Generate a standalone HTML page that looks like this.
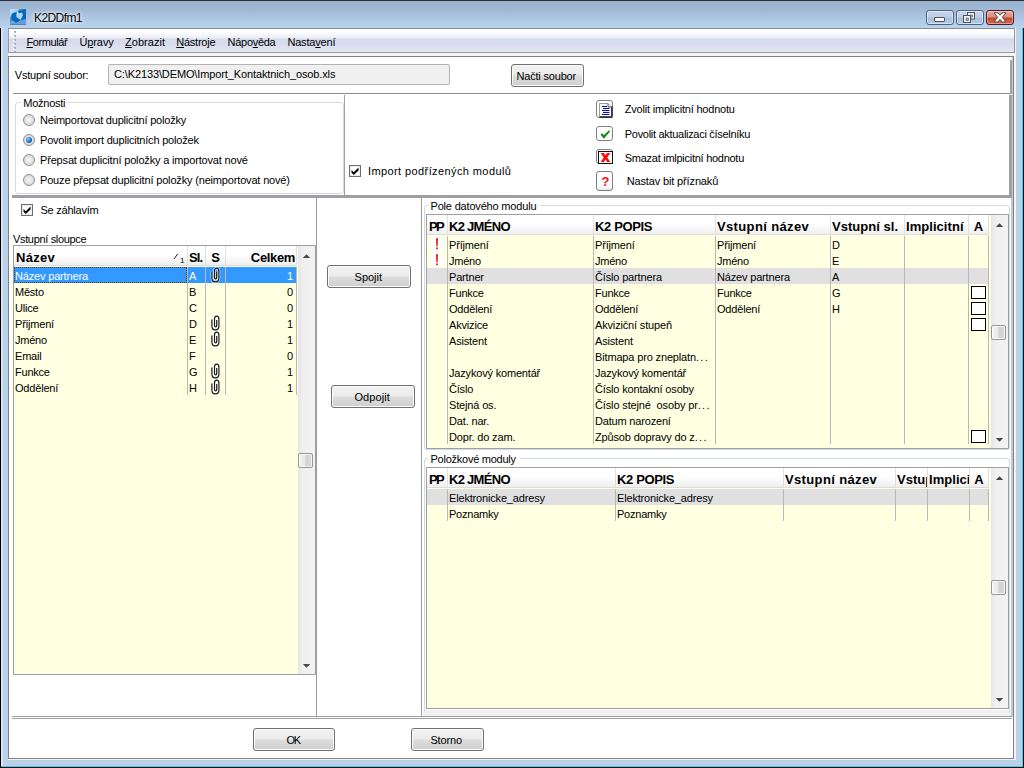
<!DOCTYPE html>
<html><head><meta charset="utf-8"><title>K2DDfm1</title>
<style>
*{box-sizing:border-box;margin:0;padding:0}
html,body{width:1024px;height:768px;overflow:hidden}
body{position:relative;background:#b3cce6;font-family:"Liberation Sans","DejaVu Sans",sans-serif;font-size:11px;color:#000}
.a{position:absolute}
.t{position:absolute;white-space:nowrap;line-height:14px;font-size:11px}
.frame{left:0;top:0;width:1024px;height:768px;background:linear-gradient(180deg,#98b2ce 0,#a0bad6 10px,#b0c9e5 20px,#b9d3ee 28px,#b9d2ec 60px,#b9d1ea 100%)}
.menubar{left:8px;top:28px;width:1007px;height:25px;border:1px solid #999;border-top-color:#8c8c8c;background:linear-gradient(180deg,#ffffff 0,#fbfbfd 4px,#eceef7 9px,#d5daec 10px,#d9ddee 16px,#e4e7f3 23px)}
.client{left:8px;top:56px;width:1006px;height:703px;background:#fff;border:1px solid #828282}
.btn{position:absolute;border:1px solid #707070;border-radius:3px;background:linear-gradient(180deg,#f2f2f2 0,#ebebeb 48%,#dddddd 52%,#cfcfcf 100%);box-shadow:inset 0 0 0 1px #fcfcfc;height:23px}
.grid{position:absolute;background:#ffffe1;border:1px solid #a0a0a0;overflow:hidden}
.hd{position:absolute;top:0;height:19px;background:linear-gradient(180deg,#ffffff 0,#ffffff 45%,#efefef 100%);font-weight:bold;font-size:13px;line-height:19px;white-space:nowrap;overflow:hidden;border-right:1px solid #e0e0e0;border-bottom:1px solid #dcdcdc}
.c{position:absolute;white-space:pre;font-size:11px;line-height:16px;height:16px;overflow:hidden}
.vl{position:absolute;width:1px;background:#b8b8b8}
.hl{position:absolute;height:1px;background:#a0a0a0}
.gb{position:absolute;border:1px solid #d0dbe6;border-radius:3px}
.radio{position:absolute;width:12px;height:12px;border-radius:50%;border:1px solid #8e8f8f;background:radial-gradient(circle at 50% 50%,#f6f6f6 0,#dcdcdc 65%,#c4c4c4 100%)}
.chk{position:absolute;width:12px;height:12px;border:1px solid #6e6e6e;background:#fff;box-shadow:inset 0 0 0 1px #ececec}
.sb{position:absolute;background:linear-gradient(90deg,#e6e6e6 0,#f0f0f0 30%,#f3f3f3 100%)}
.thumb{position:absolute;border:1px solid #979797;border-radius:2px;background:linear-gradient(90deg,#f4f4f4 0,#e6e6e6 48%,#d0d0d0 52%,#dadada 100%);box-shadow:inset 0 0 0 1px rgba(255,255,255,.7)}
.row{position:absolute;height:16px}
.cb{position:absolute;width:15px;height:13px;border:1px solid #000;background:#fff}
.ib{position:absolute;width:17px;border:1px solid #808080;border-radius:3px;background:#fff}
.cap{position:absolute;top:10px;height:15px;border-radius:3px}
</style></head><body>
<div class="a frame"></div>
<div class="a" style="left:0;top:0;width:1024px;height:1px;background:#2e2e2e"></div>
<div class="a" style="left:1px;top:28px;width:2px;height:738px;background:#d6e4f3"></div>
<div class="a" style="left:0;top:28px;width:1px;height:740px;background:#000"></div>
<div class="a" style="left:1022px;top:28px;width:1px;height:739px;background:#27d9f5"></div>
<div class="a" style="left:1px;top:766px;width:1022px;height:1px;background:#27d9f5"></div>
<div class="a" style="left:1023px;top:28px;width:1px;height:740px;background:#000"></div>
<div class="a" style="left:0;top:767px;width:1024px;height:1px;background:#000"></div>
<div class="a" style="left:8px;top:28px;width:1008px;height:732px;background:#f4f4f4"></div>

<svg class="a" style="left:10px;top:9px" width="16" height="16" viewBox="0 0 16 16">
<defs><linearGradient id="ig" x1="0" y1="0" x2="1" y2="1"><stop offset="0" stop-color="#9fd0f0"/><stop offset="0.35" stop-color="#3d97d6"/><stop offset="1" stop-color="#0a64b0"/></linearGradient></defs>
<rect width="16" height="16" fill="url(#ig)"/>
<path d="M2 4.5 L6.5 2.5 L6.5 8 L10 11.5 L6 14 L1 10 Z" fill="#0668b6"/>
<path d="M8 2 L16 0 L16 10 L11 11 L13 6 L12 3.5 L9 4.5 Z" fill="#0668b6"/>
<path d="M6.5 5.5 L7.6 2.5 L8.6 4.6 L11.8 3.4 L13 6 L10.6 10.8 L6.5 8 Z" fill="#a8d8f4"/>
<path d="M0 13 L3 11.5 L6 14 L10.5 11.5 L16 10 L16 16 L0 16 Z" fill="#7aa6da" opacity="0.85"/>
<path d="M0 0 L9.5 0 L7 3 L2 4.6 L0 8 Z" fill="#fff" opacity=".45"/><path d="M7.2 2.4 L8.2 2.4 L8 6 L7 6 Z" fill="#fff" opacity=".8"/><rect x="0" y="15.3" width="16" height=".7" fill="#3a62a4" opacity=".7"/>
</svg>

<div class="t" style="left:34px;top:10px;letter-spacing:-0.59px;font-size:12px;line-height:16px;text-shadow:0 0 3px #fff,0 0 5px #fff">K2DDfm1</div>

<div class="cap" style="left:926px;width:28px;border:1px solid #4f6480;background:linear-gradient(180deg,#c6d6ea 0,#bccee5 48%,#a7bfdb 52%,#b4cae4 100%);box-shadow:inset 0 0 0 1px rgba(255,255,255,.45)"></div>
<div class="cap" style="left:956px;width:28px;border:1px solid #4f6480;background:linear-gradient(180deg,#c6d6ea 0,#bccee5 48%,#a7bfdb 52%,#b4cae4 100%);box-shadow:inset 0 0 0 1px rgba(255,255,255,.45)"></div>
<div class="cap" style="left:986px;width:28px;border:1px solid #5a1520;background:linear-gradient(180deg,#e6ad9f 0,#d98c7b 48%,#c4452b 52%,#d46a50 100%);box-shadow:inset 0 0 0 1px rgba(255,255,255,.35)"></div>
<div class="a" style="left:934px;top:17px;width:11px;height:5px;border:1px solid #50525a;background:#f6f6f6;border-radius:1px"></div>
<svg class="a" style="left:962px;top:11px" width="14" height="13" viewBox="0 0 14 13"><rect x="5.5" y="1.5" width="7" height="6.5" fill="#f2f2f2" stroke="#50525a"/><rect x="8" y="4" width="2.5" height="2" fill="#9fb4cf" stroke="#50525a" stroke-width=".6"/><rect x="1.5" y="4.5" width="7" height="7" fill="#f2f2f2" stroke="#50525a"/><rect x="4" y="7" width="2.5" height="2.5" fill="#9fb4cf" stroke="#50525a" stroke-width=".6"/></svg>
<svg class="a" style="left:993px;top:12px" width="14" height="11" viewBox="0 0 14 11"><path d="M1 0.8 L5 0.8 L7 3.2 L9 0.8 L13 0.8 L9.3 5.3 L13 10 L9 10 L7 7.4 L5 10 L1 10 L4.7 5.3 Z" fill="#fbfbfb" stroke="#5a4a50" stroke-width="1"/></svg>

<div class="a menubar"></div>
<svg class="a" style="left:13px;top:30px" width="4" height="23" viewBox="0 0 4 23"><g fill="#a9abb8"><rect x="1" y="1" width="2" height="2"/><rect x="1" y="5" width="2" height="2"/><rect x="1" y="9" width="2" height="2"/><rect x="1" y="13" width="2" height="2"/><rect x="1" y="17" width="2" height="2"/><rect x="1" y="21" width="2" height="1"/></g><g fill="#fff"><rect x="0" y="2" width="1.5" height="1.5"/><rect x="0" y="6" width="1.5" height="1.5"/><rect x="0" y="10" width="1.5" height="1.5"/><rect x="0" y="14" width="1.5" height="1.5"/><rect x="0" y="18" width="1.5" height="1.5"/></g></svg>

<div class="t" style="left:26.5px;top:35px;letter-spacing:-0.4px;"><u>F</u>ormulář</div>
<div class="t" style="left:79.4px;top:35px;letter-spacing:-0.09px;">Ú<u>p</u>ravy</div>
<div class="t" style="left:125.1px;top:35px;letter-spacing:0.02px;"><u>Z</u>obrazit</div>
<div class="t" style="left:176.3px;top:35px;letter-spacing:-0.25px;"><u>N</u>ástroje</div>
<div class="t" style="left:227.6px;top:35px;letter-spacing:-0.29px;">Nápo<u>v</u>ěda</div>
<div class="t" style="left:287.4px;top:35px;letter-spacing:-0.18px;">Nasta<u>v</u>ení</div>
<div class="a client"></div>
<div class="a" style="left:1012px;top:57px;width:1px;height:660px;background:#c8c8c8"></div>
<div class="a" style="left:1010px;top:60px;width:2px;height:34px;background:#a0a0a0"></div>
<div class="a" style="left:1009px;top:95px;width:3px;height:103px;background:#a0a0a0"></div>
<div class="t" style="left:14.8px;top:68px;letter-spacing:-0.23px;">Vstupní soubor:</div>
<div class="a" style="left:108px;top:64px;width:342px;height:21px;border:1px solid #b4b4b4;border-radius:2px;background:#f0f0f0"></div>
<div class="t" style="left:114px;top:67px;letter-spacing:-0.12px;">C:\K2133\DEMO\Import_Kontaktnich_osob.xls</div>
<div class="btn" style="left:511px;top:64px;width:73px"></div>
<div class="t" style="left:516.5px;top:69px;letter-spacing:-0.19px;">Načti soubor</div>
<div class="hl" style="left:13px;top:93px;width:998px;background:#8e8e8e"></div>
<div class="gb" style="left:15px;top:102px;width:329px;height:92px"></div>
<div class="a" style="left:21px;top:100px;width:46px;height:5px;background:#fff"></div>
<div class="t" style="left:23.25px;top:96px;letter-spacing:-0.25px;">Možnosti</div>
<div class="radio" style="left:23px;top:114px"></div>
<div class="radio" style="left:23px;top:134px"></div>
<div class="radio" style="left:23px;top:154px"></div>
<div class="radio" style="left:23px;top:174px"></div>
<div class="a" style="left:26px;top:137px;width:6px;height:6px;border-radius:50%;background:radial-gradient(circle at 35% 35%,#7fd0ff 0,#1c6ec4 55%,#0b3f8c 100%)"></div>
<div class="t" style="left:40px;top:113px;letter-spacing:-0.2px;">Neimportovat duplicitní položky</div>
<div class="t" style="left:40px;top:133px;letter-spacing:-0.2px;">Povolit import duplicitních položek</div>
<div class="t" style="left:40px;top:153px;letter-spacing:-0.17px;">Přepsat duplicitní položky a importovat nové</div>
<div class="t" style="left:40px;top:173px;letter-spacing:-0.17px;">Pouze přepsat duplicitní položky (neimportovat nové)</div>
<div class="vl" style="left:344px;top:95px;height:101px;background:#a0a0a0"></div>
<div class="chk" style="left:349px;top:165px"></div><svg class="a" style="left:349px;top:165px" width="12" height="12" viewBox="0 0 12 12"><path d="M2.5 4.9 L4.8 7.2 L9.5 2.5 L9.5 5.4 L4.8 10.1 L2.5 7.8 Z" fill="#000"/></svg>
<div class="t" style="left:368px;top:164px;letter-spacing:0.4px;">Import podřízených modulů</div>
<div class="ib" style="left:596px;top:100px;height:18px"></div>
<svg class="a" style="left:598px;top:102px" width="15" height="16" viewBox="0 0 15 16"><path d="M1.5 1.5 H10 L13.5 5 V14.5 H1.5 Z" fill="#fff" stroke="#9a9a9a"/><path d="M10 1.5 V5 H13.5" fill="#e8e8e8" stroke="#333" stroke-width=".8"/><path d="M13.9 4.5 V15.2 H1.5" fill="none" stroke="#111" stroke-width="1.2"/><g stroke="#1414b4" stroke-width="1.1"><path d="M4 4.5 H9"/><path d="M5 6.5 H11.5"/><path d="M4 8.5 H11.5"/><path d="M5 10.5 H11.5"/><path d="M4 12.5 H11.5"/></g></svg>
<div class="ib" style="left:596px;top:126px;height:15px"></div>
<svg class="a" style="left:599px;top:128px" width="12" height="12" viewBox="0 0 12 12"><path d="M1.5 6.5 L3.2 5.2 L4.8 7.2 L10 2.2 L11 3.6 L4.8 10.8 Z" fill="#0a8a0a"/></svg>
<div class="ib" style="left:596px;top:149px;height:15px"></div>
<div class="a" style="left:598px;top:151px;width:15px;height:13px;border:1px solid #111;background:#fff"></div>
<svg class="a" style="left:600px;top:152px" width="11" height="11" viewBox="0 0 11 11"><path d="M0.6 1 L3.9 1 L5.5 3.3 L7.1 1 L10.4 1 L7.2 5.4 L10.4 9.9 L7.1 9.9 L5.5 7.5 L3.9 9.9 L0.6 9.9 L3.8 5.4 Z" fill="#ff0a0a"/></svg>
<div class="ib" style="left:596px;top:171px;height:20px;background:linear-gradient(180deg,#fff 0,#fff 80%,#e4e4e4 100%)"></div>
<div class="a" style="left:597px;top:174px;width:17px;text-align:center;color:#ff0a0a;font-weight:bold;font-size:13px;line-height:15px">?</div>

<div class="t" style="left:624.8px;top:102px;letter-spacing:-0.2px;">Zvolit implicitní hodnotu</div>
<div class="t" style="left:624.8px;top:127px;letter-spacing:-0.3px;">Povolit aktualizaci číselníku</div>
<div class="t" style="left:624.8px;top:151px;letter-spacing:-0.27px;">Smazat imlpicitní hodnotu</div>
<div class="t" style="left:626.7px;top:174px;letter-spacing:-0.14px;">Nastav bit příznaků</div>
<div class="hl" style="left:12px;top:195px;width:1000px;height:3px;background:#9f9f9f"></div>
<div class="chk" style="left:21px;top:204px"></div><svg class="a" style="left:21px;top:204px" width="12" height="12" viewBox="0 0 12 12"><path d="M2.5 4.9 L4.8 7.2 L9.5 2.5 L9.5 5.4 L4.8 10.1 L2.5 7.8 Z" fill="#000"/></svg>
<div class="t" style="left:40.5px;top:203px;letter-spacing:-0.23px;">Se záhlavím</div>
<div class="t" style="left:13px;top:232px;letter-spacing:-0.34px;">Vstupní sloupce</div>
<div class="grid" style="left:13px;top:245px;width:303px;height:430px">
<div class="hd" style="left:0px;width:174px;padding-left:2px;letter-spacing:0.31px;height:20px;line-height:24px">Název</div>
<div class="hd" style="left:174px;width:18px;padding-left:1px;letter-spacing:-0.95px;height:20px;line-height:24px">Sl.</div>
<div class="hd" style="left:192px;width:20px;text-align:center;letter-spacing:0.0px;height:20px;line-height:24px">S</div>
<div class="hd" style="left:212px;width:71px;text-align:right;padding-right:1px;letter-spacing:-0.35px;height:20px;line-height:24px">Celkem</div>
<div class="row" style="left:0px;top:21px;width:282px;background:#3399ff;color:#fff">
<div class="c" style="left:0px;width:173px;padding-left:1px;line-height:18px;letter-spacing:-0.17px">Název partnera</div>
<div class="c" style="left:174px;width:17px;padding-left:1px;line-height:18px;letter-spacing:-0.22px">A</div>
<svg class="a" style="left:192px;top:0" width="18" height="16" viewBox="0 0 18 16"><path d="M5.9 4.5 V11 Q5.9 14.9 9.4 14.9 Q12.9 14.9 12.9 11 V4 Q12.9 1.2 10.7 1.2 Q8.5 1.2 8.5 4 V10.6 Q8.5 12 9.6 12 Q10.7 12 10.7 10.6 V5" fill="none" stroke="#fff" stroke-opacity=".75" stroke-width="2.6"/><path d="M5.9 4.5 V11 Q5.9 14.9 9.4 14.9 Q12.9 14.9 12.9 11 V4 Q12.9 1.2 10.7 1.2 Q8.5 1.2 8.5 4 V10.6 Q8.5 12 9.6 12 Q10.7 12 10.7 10.6 V5" fill="none" stroke="#1a1a1a" stroke-width="1.2"/></svg>
<div class="c" style="left:212px;width:70px;text-align:right;padding-right:3px;line-height:18px;letter-spacing:-0.18px">1</div>
<div class="a" style="left:0;top:0;width:173px;height:16px;border:1px dotted #5a3a00"></div>
</div>
<div class="row" style="left:0px;top:37px;width:282px;color:#000">
<div class="c" style="left:0px;width:173px;padding-left:1px;line-height:18px;letter-spacing:-0.22px">Město</div>
<div class="c" style="left:174px;width:17px;padding-left:1px;line-height:18px;letter-spacing:-0.22px">B</div>
<div class="c" style="left:212px;width:70px;text-align:right;padding-right:3px;line-height:18px;letter-spacing:-0.18px">0</div>
</div>
<div class="row" style="left:0px;top:53px;width:282px;color:#000">
<div class="c" style="left:0px;width:173px;padding-left:1px;line-height:18px;letter-spacing:-0.18px">Ulice</div>
<div class="c" style="left:174px;width:17px;padding-left:1px;line-height:18px;letter-spacing:-0.24px">C</div>
<div class="c" style="left:212px;width:70px;text-align:right;padding-right:3px;line-height:18px;letter-spacing:-0.18px">0</div>
</div>
<div class="row" style="left:0px;top:69px;width:282px;color:#000">
<div class="c" style="left:0px;width:173px;padding-left:1px;line-height:18px;letter-spacing:-0.17px">Přijmení</div>
<div class="c" style="left:174px;width:17px;padding-left:1px;line-height:18px;letter-spacing:-0.24px">D</div>
<svg class="a" style="left:192px;top:0" width="18" height="16" viewBox="0 0 18 16"><path d="M5.9 4.5 V11 Q5.9 14.9 9.4 14.9 Q12.9 14.9 12.9 11 V4 Q12.9 1.2 10.7 1.2 Q8.5 1.2 8.5 4 V10.6 Q8.5 12 9.6 12 Q10.7 12 10.7 10.6 V5" fill="none" stroke="#fff" stroke-opacity=".75" stroke-width="2.6"/><path d="M5.9 4.5 V11 Q5.9 14.9 9.4 14.9 Q12.9 14.9 12.9 11 V4 Q12.9 1.2 10.7 1.2 Q8.5 1.2 8.5 4 V10.6 Q8.5 12 9.6 12 Q10.7 12 10.7 10.6 V5" fill="none" stroke="#1a1a1a" stroke-width="1.2"/></svg>
<div class="c" style="left:212px;width:70px;text-align:right;padding-right:3px;line-height:18px;letter-spacing:-0.18px">1</div>
</div>
<div class="row" style="left:0px;top:85px;width:282px;color:#000">
<div class="c" style="left:0px;width:173px;padding-left:1px;line-height:18px;letter-spacing:-0.25px">Jméno</div>
<div class="c" style="left:174px;width:17px;padding-left:1px;line-height:18px;letter-spacing:-0.22px">E</div>
<svg class="a" style="left:192px;top:0" width="18" height="16" viewBox="0 0 18 16"><path d="M5.9 4.5 V11 Q5.9 14.9 9.4 14.9 Q12.9 14.9 12.9 11 V4 Q12.9 1.2 10.7 1.2 Q8.5 1.2 8.5 4 V10.6 Q8.5 12 9.6 12 Q10.7 12 10.7 10.6 V5" fill="none" stroke="#fff" stroke-opacity=".75" stroke-width="2.6"/><path d="M5.9 4.5 V11 Q5.9 14.9 9.4 14.9 Q12.9 14.9 12.9 11 V4 Q12.9 1.2 10.7 1.2 Q8.5 1.2 8.5 4 V10.6 Q8.5 12 9.6 12 Q10.7 12 10.7 10.6 V5" fill="none" stroke="#1a1a1a" stroke-width="1.2"/></svg>
<div class="c" style="left:212px;width:70px;text-align:right;padding-right:3px;line-height:18px;letter-spacing:-0.18px">1</div>
</div>
<div class="row" style="left:0px;top:101px;width:282px;color:#000">
<div class="c" style="left:0px;width:173px;padding-left:1px;line-height:18px;letter-spacing:-0.21px">Email</div>
<div class="c" style="left:174px;width:17px;padding-left:1px;line-height:18px;letter-spacing:-0.2px">F</div>
<div class="c" style="left:212px;width:70px;text-align:right;padding-right:3px;line-height:18px;letter-spacing:-0.18px">0</div>
</div>
<div class="row" style="left:0px;top:117px;width:282px;color:#000">
<div class="c" style="left:0px;width:173px;padding-left:1px;line-height:18px;letter-spacing:-0.22px">Funkce</div>
<div class="c" style="left:174px;width:17px;padding-left:1px;line-height:18px;letter-spacing:-0.26px">G</div>
<svg class="a" style="left:192px;top:0" width="18" height="16" viewBox="0 0 18 16"><path d="M5.9 4.5 V11 Q5.9 14.9 9.4 14.9 Q12.9 14.9 12.9 11 V4 Q12.9 1.2 10.7 1.2 Q8.5 1.2 8.5 4 V10.6 Q8.5 12 9.6 12 Q10.7 12 10.7 10.6 V5" fill="none" stroke="#fff" stroke-opacity=".75" stroke-width="2.6"/><path d="M5.9 4.5 V11 Q5.9 14.9 9.4 14.9 Q12.9 14.9 12.9 11 V4 Q12.9 1.2 10.7 1.2 Q8.5 1.2 8.5 4 V10.6 Q8.5 12 9.6 12 Q10.7 12 10.7 10.6 V5" fill="none" stroke="#1a1a1a" stroke-width="1.2"/></svg>
<div class="c" style="left:212px;width:70px;text-align:right;padding-right:3px;line-height:18px;letter-spacing:-0.18px">1</div>
</div>
<div class="row" style="left:0px;top:133px;width:282px;color:#000">
<div class="c" style="left:0px;width:173px;padding-left:1px;line-height:18px;letter-spacing:-0.19px">Oddělení</div>
<div class="c" style="left:174px;width:17px;padding-left:1px;line-height:18px;letter-spacing:-0.24px">H</div>
<svg class="a" style="left:192px;top:0" width="18" height="16" viewBox="0 0 18 16"><path d="M5.9 4.5 V11 Q5.9 14.9 9.4 14.9 Q12.9 14.9 12.9 11 V4 Q12.9 1.2 10.7 1.2 Q8.5 1.2 8.5 4 V10.6 Q8.5 12 9.6 12 Q10.7 12 10.7 10.6 V5" fill="none" stroke="#fff" stroke-opacity=".75" stroke-width="2.6"/><path d="M5.9 4.5 V11 Q5.9 14.9 9.4 14.9 Q12.9 14.9 12.9 11 V4 Q12.9 1.2 10.7 1.2 Q8.5 1.2 8.5 4 V10.6 Q8.5 12 9.6 12 Q10.7 12 10.7 10.6 V5" fill="none" stroke="#1a1a1a" stroke-width="1.2"/></svg>
<div class="c" style="left:212px;width:70px;text-align:right;padding-right:3px;line-height:18px;letter-spacing:-0.18px">1</div>
</div>
<div class="vl" style="left:173px;top:21px;height:128px"></div>
<div class="vl" style="left:191px;top:21px;height:128px"></div>
<div class="vl" style="left:211px;top:21px;height:128px"></div>
<div class="vl" style="left:282px;top:21px;height:128px"></div>
<div class="sb" style="left:284px;top:0;width:17px;height:428px"></div>
<svg class="a" style="left:288px;top:7px" width="9" height="6" viewBox="0 0 9 6"><path d="M0.8 5 L4.5 1.2 L8.2 5 Z" fill="#484848"/></svg>
<svg class="a" style="left:288px;top:417px" width="9" height="6" viewBox="0 0 9 6"><path d="M0.8 1 L4.5 4.8 L8.2 1 Z" fill="#484848"/></svg>
<div class="thumb" style="left:284px;top:207px;width:15px;height:15px"></div>
</div>
<svg class="a" style="left:173px;top:253px" width="6" height="7" viewBox="0 0 6 7"><path d="M1 6 L4.6 1" stroke="#222" stroke-width="1" fill="none"/></svg>
<div class="t" style="left:180px;top:256px;font-size:8px;line-height:9px">1</div>

<div class="vl" style="left:316px;top:198px;height:519px;background:#9c9c9c"></div>
<div class="vl" style="left:421px;top:198px;height:519px;background:#9c9c9c"></div>
<div class="btn" style="left:327px;top:265px;width:84px"></div>
<div class="btn" style="left:331px;top:385px;width:84px"></div>

<div class="t" style="left:354.6px;top:270px;letter-spacing:-0.03px;">Spojit</div>
<div class="t" style="left:354.4px;top:390px;letter-spacing:0.11px;">Odpojit</div>
<div class="a" style="left:423px;top:710px;width:589px;height:6px;background:#f0f0f0"></div>
<div class="a" style="left:1011px;top:198px;width:1px;height:518px;background:#c4c4c4"></div>
<div class="gb" style="left:424px;top:205px;width:586px;height:245px"></div>
<div class="a" style="left:428px;top:203px;width:112px;height:5px;background:#fff"></div>

<div class="t" style="left:430.5px;top:199px;letter-spacing:-0.18px;">Pole datového modulu</div>
<div class="grid" style="left:426px;top:214px;width:583px;height:235px">
<div class="hd" style="left:0px;width:21px;padding-left:2px;letter-spacing:-1.74px;height:20px;line-height:24px">PP</div>
<div class="hd" style="left:21px;width:146px;padding-left:1px;letter-spacing:-0.71px;height:20px;line-height:24px">K2 JMÉNO</div>
<div class="hd" style="left:167px;width:122px;padding-left:1px;letter-spacing:-0.35px;height:20px;line-height:24px">K2 POPIS</div>
<div class="hd" style="left:289px;width:115px;padding-left:1px;letter-spacing:0.36px;height:20px;line-height:24px">Vstupní název</div>
<div class="hd" style="left:404px;width:74px;padding-left:1px;letter-spacing:0.03px;height:20px;line-height:24px">Vstupní sl.</div>
<div class="hd" style="left:478px;width:64px;padding-left:1px;letter-spacing:0.05px;height:20px;line-height:24px">Implicitní</div>
<div class="hd" style="left:542px;width:20px;text-align:center;letter-spacing:0.0px;height:20px;line-height:24px">A</div>
<div class="row" style="left:0px;top:21px;width:561px;color:#000">
<div class="a" style="left:0px;top:0;width:20px;height:16px"><div class="a" style="left:3px;top:0;width:14px;height:16px;border-radius:7px;background:#fff"></div><svg class="a" style="left:8px;top:2px" width="4" height="12" viewBox="0 0 4 12"><path d="M1 0.3 H3 L2.7 8.3 H1.3 Z" fill="#f01818"/><rect x="1.1" y="9.4" width="1.8" height="1.8" fill="#f01818"/></svg></div>
<div class="c" style="left:21px;width:145px;padding-left:1px;line-height:18px;letter-spacing:-0.18px">Příjmení</div>
<div class="c" style="left:167px;width:121px;padding-left:1px;line-height:18px;letter-spacing:-0.18px">Příjmení</div>
<div class="c" style="left:289px;width:114px;padding-left:1px;line-height:18px;letter-spacing:-0.17px">Přijmení</div>
<div class="c" style="left:404px;width:73px;padding-left:1px;line-height:18px;letter-spacing:-0.24px">D</div>
</div>
<div class="row" style="left:0px;top:37px;width:561px;color:#000">
<div class="a" style="left:0px;top:0;width:20px;height:16px"><div class="a" style="left:3px;top:0;width:14px;height:16px;border-radius:7px;background:#fff"></div><svg class="a" style="left:8px;top:2px" width="4" height="12" viewBox="0 0 4 12"><path d="M1 0.3 H3 L2.7 8.3 H1.3 Z" fill="#f01818"/><rect x="1.1" y="9.4" width="1.8" height="1.8" fill="#f01818"/></svg></div>
<div class="c" style="left:21px;width:145px;padding-left:1px;line-height:18px;letter-spacing:-0.25px">Jméno</div>
<div class="c" style="left:167px;width:121px;padding-left:1px;line-height:18px;letter-spacing:-0.25px">Jméno</div>
<div class="c" style="left:289px;width:114px;padding-left:1px;line-height:18px;letter-spacing:-0.25px">Jméno</div>
<div class="c" style="left:404px;width:73px;padding-left:1px;line-height:18px;letter-spacing:-0.22px">E</div>
</div>
<div class="row" style="left:0px;top:53px;width:561px;background:#e0e0e0;color:#000">
<div class="c" style="left:21px;width:145px;padding-left:1px;line-height:18px;letter-spacing:-0.18px">Partner</div>
<div class="c" style="left:167px;width:121px;padding-left:1px;line-height:18px;letter-spacing:-0.16px">Číslo partnera</div>
<div class="c" style="left:289px;width:114px;padding-left:1px;line-height:18px;letter-spacing:-0.17px">Název partnera</div>
<div class="c" style="left:404px;width:73px;padding-left:1px;line-height:18px;letter-spacing:-0.22px">A</div>
</div>
<div class="row" style="left:0px;top:69px;width:561px;color:#000">
<div class="c" style="left:21px;width:145px;padding-left:1px;line-height:18px;letter-spacing:-0.22px">Funkce</div>
<div class="c" style="left:167px;width:121px;padding-left:1px;line-height:18px;letter-spacing:-0.22px">Funkce</div>
<div class="c" style="left:289px;width:114px;padding-left:1px;line-height:18px;letter-spacing:-0.22px">Funkce</div>
<div class="c" style="left:404px;width:73px;padding-left:1px;line-height:18px;letter-spacing:-0.26px">G</div>
<div class="cb" style="left:542px;top:2px;margin-left:2px"></div>
</div>
<div class="row" style="left:0px;top:85px;width:561px;color:#000">
<div class="c" style="left:21px;width:145px;padding-left:1px;line-height:18px;letter-spacing:-0.19px">Oddělení</div>
<div class="c" style="left:167px;width:121px;padding-left:1px;line-height:18px;letter-spacing:-0.19px">Oddělení</div>
<div class="c" style="left:289px;width:114px;padding-left:1px;line-height:18px;letter-spacing:-0.19px">Oddělení</div>
<div class="c" style="left:404px;width:73px;padding-left:1px;line-height:18px;letter-spacing:-0.24px">H</div>
<div class="cb" style="left:542px;top:2px;margin-left:2px"></div>
</div>
<div class="row" style="left:0px;top:101px;width:561px;color:#000">
<div class="c" style="left:21px;width:145px;padding-left:1px;line-height:18px;letter-spacing:-0.17px">Akvizice</div>
<div class="c" style="left:167px;width:121px;padding-left:1px;line-height:18px;letter-spacing:-0.16px">Akviziční stupeň</div>
<div class="cb" style="left:542px;top:2px;margin-left:2px"></div>
</div>
<div class="row" style="left:0px;top:117px;width:561px;color:#000">
<div class="c" style="left:21px;width:145px;padding-left:1px;line-height:18px;letter-spacing:-0.17px">Asistent</div>
<div class="c" style="left:167px;width:121px;padding-left:1px;line-height:18px;letter-spacing:-0.17px">Asistent</div>
</div>
<div class="row" style="left:0px;top:133px;width:561px;color:#000">
<div class="c" style="left:167px;width:121px;padding-left:1px;line-height:18px;letter-spacing:-0.15px">Bitmapa pro zneplatn<span style="letter-spacing:1.3px">...</span></div>
</div>
<div class="row" style="left:0px;top:149px;width:561px;color:#000">
<div class="c" style="left:21px;width:145px;padding-left:1px;line-height:18px;letter-spacing:-0.18px">Jazykový komentář</div>
<div class="c" style="left:167px;width:121px;padding-left:1px;line-height:18px;letter-spacing:-0.18px">Jazykový komentář</div>
</div>
<div class="row" style="left:0px;top:165px;width:561px;color:#000">
<div class="c" style="left:21px;width:145px;padding-left:1px;line-height:18px;letter-spacing:-0.19px">Číslo</div>
<div class="c" style="left:167px;width:121px;padding-left:1px;line-height:18px;letter-spacing:-0.16px">Číslo kontakní osoby</div>
</div>
<div class="row" style="left:0px;top:181px;width:561px;color:#000">
<div class="c" style="left:21px;width:145px;padding-left:1px;line-height:18px;letter-spacing:-0.16px">Stejná os.</div>
<div class="c" style="left:167px;width:121px;padding-left:1px;line-height:18px;letter-spacing:-0.14px">Číslo stejné  osoby pr<span style="letter-spacing:1.3px">...</span></div>
</div>
<div class="row" style="left:0px;top:197px;width:561px;color:#000">
<div class="c" style="left:21px;width:145px;padding-left:1px;line-height:18px;letter-spacing:-0.16px">Dat. nar.</div>
<div class="c" style="left:167px;width:121px;padding-left:1px;line-height:18px;letter-spacing:-0.18px">Datum narození</div>
</div>
<div class="row" style="left:0px;top:213px;width:561px;color:#000">
<div class="c" style="left:21px;width:145px;padding-left:1px;line-height:18px;letter-spacing:-0.17px">Dopr. do zam.</div>
<div class="c" style="left:167px;width:121px;padding-left:1px;line-height:18px;letter-spacing:-0.16px">Způsob dopravy do z<span style="letter-spacing:1.3px">...</span></div>
<div class="cb" style="left:542px;top:2px;margin-left:2px"></div>
</div>
<div class="vl" style="left:20px;top:21px;height:208px"></div>
<div class="vl" style="left:166px;top:21px;height:208px"></div>
<div class="vl" style="left:288px;top:21px;height:208px"></div>
<div class="vl" style="left:403px;top:21px;height:208px"></div>
<div class="vl" style="left:477px;top:21px;height:208px"></div>
<div class="vl" style="left:541px;top:21px;height:208px"></div>
<div class="vl" style="left:561px;top:21px;height:208px"></div>
<div class="sb" style="left:564px;top:0;width:17px;height:233px"></div>
<svg class="a" style="left:568px;top:7px" width="9" height="6" viewBox="0 0 9 6"><path d="M0.8 5 L4.5 1.2 L8.2 5 Z" fill="#484848"/></svg>
<svg class="a" style="left:568px;top:222px" width="9" height="6" viewBox="0 0 9 6"><path d="M0.8 1 L4.5 4.8 L8.2 1 Z" fill="#484848"/></svg>
<div class="thumb" style="left:564px;top:110px;width:15px;height:15px"></div>
</div>
<div class="gb" style="left:424px;top:458px;width:586px;height:255px;border-bottom:0"></div>
<div class="a" style="left:428px;top:456px;width:92px;height:5px;background:#fff"></div>

<div class="t" style="left:430.5px;top:452px;letter-spacing:-0.25px;">Položkové moduly</div>
<div class="grid" style="left:426px;top:467px;width:583px;height:242px">
<div class="hd" style="left:0px;width:21px;padding-left:2px;letter-spacing:-1.74px;height:20px;line-height:24px">PP</div>
<div class="hd" style="left:21px;width:168px;padding-left:1px;letter-spacing:-0.71px;height:20px;line-height:24px">K2 JMÉNO</div>
<div class="hd" style="left:189px;width:168px;padding-left:1px;letter-spacing:-0.35px;height:20px;line-height:24px">K2 POPIS</div>
<div class="hd" style="left:357px;width:112px;padding-left:1px;letter-spacing:0.36px;height:20px;line-height:24px">Vstupní název</div>
<div class="hd" style="left:469px;width:32px;padding-left:1px;letter-spacing:0.03px;height:20px;line-height:24px">Vstupní sl.</div>
<div class="hd" style="left:501px;width:42px;padding-left:1px;letter-spacing:0.05px;height:20px;line-height:24px">Implicitní</div>
<div class="hd" style="left:543px;width:19px;text-align:center;letter-spacing:0.0px;height:20px;line-height:24px">A</div>
<div class="row" style="left:0px;top:21px;width:561px;background:#e0e0e0;color:#000">
<div class="c" style="left:21px;width:167px;padding-left:1px;line-height:18px;letter-spacing:-0.17px">Elektronicke_adresy</div>
<div class="c" style="left:189px;width:167px;padding-left:1px;line-height:18px;letter-spacing:-0.17px">Elektronicke_adresy</div>
</div>
<div class="row" style="left:0px;top:37px;width:561px;color:#000">
<div class="c" style="left:21px;width:167px;padding-left:1px;line-height:18px;letter-spacing:-0.22px">Poznamky</div>
<div class="c" style="left:189px;width:167px;padding-left:1px;line-height:18px;letter-spacing:-0.22px">Poznamky</div>
</div>
<div class="vl" style="left:20px;top:21px;height:32px"></div>
<div class="vl" style="left:188px;top:21px;height:32px"></div>
<div class="vl" style="left:356px;top:21px;height:32px"></div>
<div class="vl" style="left:468px;top:21px;height:32px"></div>
<div class="vl" style="left:500px;top:21px;height:32px"></div>
<div class="vl" style="left:542px;top:21px;height:32px"></div>
<div class="vl" style="left:561px;top:21px;height:32px"></div>
<div class="sb" style="left:564px;top:0;width:17px;height:240px"></div>
<svg class="a" style="left:568px;top:7px" width="9" height="6" viewBox="0 0 9 6"><path d="M0.8 5 L4.5 1.2 L8.2 5 Z" fill="#484848"/></svg>
<svg class="a" style="left:568px;top:229px" width="9" height="6" viewBox="0 0 9 6"><path d="M0.8 1 L4.5 4.8 L8.2 1 Z" fill="#484848"/></svg>
<div class="thumb" style="left:564px;top:112px;width:15px;height:15px"></div>
</div>

<div class="hl" style="left:12px;top:716px;width:1000px"></div>
<div class="hl" style="left:12px;top:718px;width:1000px"></div>
<div class="btn" style="left:253px;top:728px;width:82px"></div>
<div class="btn" style="left:411px;top:728px;width:73px"></div>

<div class="t" style="left:286.5px;top:733px;letter-spacing:-1.41px;">OK</div>
<div class="t" style="left:430.4px;top:733px;letter-spacing:-0.16px;">Storno</div>
</body></html>
